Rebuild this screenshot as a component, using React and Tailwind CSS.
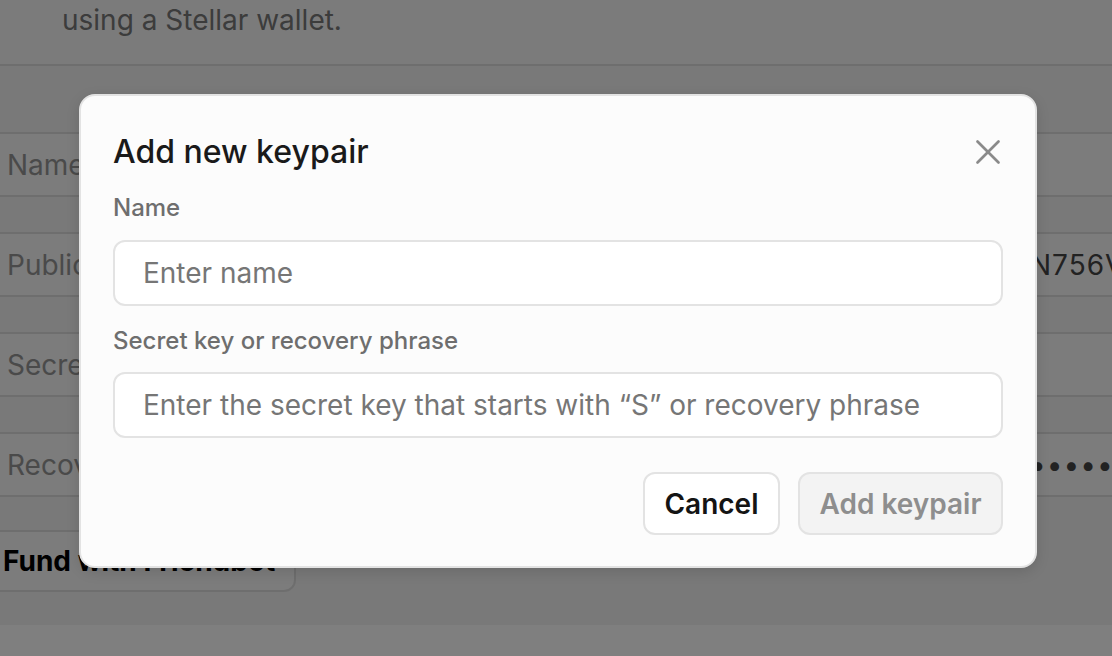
import React from 'react';

const rows = [
  { label: 'Name', value: '' },
  { label: 'Public key', value: 'N756V' },
  { label: 'Secret key', value: '' },
  { label: 'Recovery phrase', value: '••••••••••' },
];

const AddKeypairModal = () => {
  return (
    <div className="w-[958px] rounded-[16px] border-2 border-[#e3e3e3] bg-[#fcfcfc] px-[32px] pt-[32px] pb-[31px] shadow-[0_4px_14px_rgba(0,0,0,0.12)]">
      <div className="flex items-center justify-between h-[48px]">
        <h2 className="text-[32px] leading-[48px] font-medium text-[#1a1a1a]">Add new keypair</h2>
        <button className="w-[32px] h-[32px] flex items-center justify-center mr-[-1px]">
          <svg width="24" height="24" viewBox="0 0 24 24" fill="none" stroke="#8a8a8a" strokeWidth="2.6" strokeLinecap="round">
            <path d="M1.5 1.5 L22.5 22.5" />
            <path d="M22.5 1.5 L1.5 22.5" />
          </svg>
        </button>
      </div>

      <label className="block mt-[17px] text-[24px] leading-[30px] font-medium text-[#6e6e6e]">Name</label>
      <div className="mt-[17px] h-[66px] rounded-[12px] border-2 border-[#e3e3e3] bg-white flex items-center px-[28px]">
        <span className="text-[28px] text-[#767676]">Enter name</span>
      </div>

      <label className="block mt-[20px] text-[24px] leading-[30px] font-medium text-[#6e6e6e]">Secret key or recovery phrase</label>
      <div className="mt-[16px] h-[66px] rounded-[12px] border-2 border-[#e3e3e3] bg-white flex items-center px-[28px]">
        <span className="text-[28px] text-[#767676]">Enter the secret key that starts with “S” or recovery phrase</span>
      </div>

      <div className="mt-[34px] flex justify-end gap-[18px]">
        <button className="h-[63px] w-[137px] rounded-[12px] border-2 border-[#e3e3e3] bg-white text-[28px] font-semibold text-[#141414]">
          Cancel
        </button>
        <button className="h-[63px] w-[205px] rounded-[12px] border-2 border-[#e3e3e3] bg-[#f3f3f3] text-[28px] font-semibold text-[#8e8e8e]">
          Add keypair
        </button>
      </div>
    </div>
  );
};

export default function App() {
  return (
    <div className="relative w-[1112px] h-[656px] overflow-hidden bg-[#f2f2f2]" style={{ fontFamily: 'Inter, "Noto Sans", sans-serif' }}>
      {/* page behind the dialog */}
      <div className="h-[64px] bg-[#f6f6f6] pl-[62px]">
        <p className="text-[28px] leading-[36px] pt-[2px] text-[#787878]">using a Stellar wallet.</p>
      </div>
      <div className="h-[2px] bg-[#dcdcdc]" />

      <div className="mt-[66px] flex flex-col gap-[35px]">
        {rows.map(row => (
          <div key={row.label} className="h-[65px] border-y-2 border-[#dddddd] bg-[#f8f8f8] flex items-center justify-between pl-[7px]">
            <span className="text-[28px] text-[#959595] whitespace-nowrap">{row.label}</span>
            <span className="text-[28px] text-[#444444] whitespace-nowrap tracking-[1px] w-[82px] overflow-hidden">{row.value}</span>
          </div>
        ))}
      </div>

      <div className="mt-[33px] h-[62px] w-[296px] rounded-r-[12px] border-2 border-l-0 border-[#dddddd] bg-[#f8f8f8] flex items-center pl-[3px]">
        <span className="text-[28px] font-bold text-black whitespace-nowrap">Fund with Friendbot</span>
      </div>
      <div className="mt-[33px] h-[40px] bg-white" />

      {/* overlay */}
      <div className="absolute inset-0 bg-black/50">
        <div className="pl-[79px] pt-[94px]">
          <AddKeypairModal />
        </div>
      </div>
    </div>
  );
}
